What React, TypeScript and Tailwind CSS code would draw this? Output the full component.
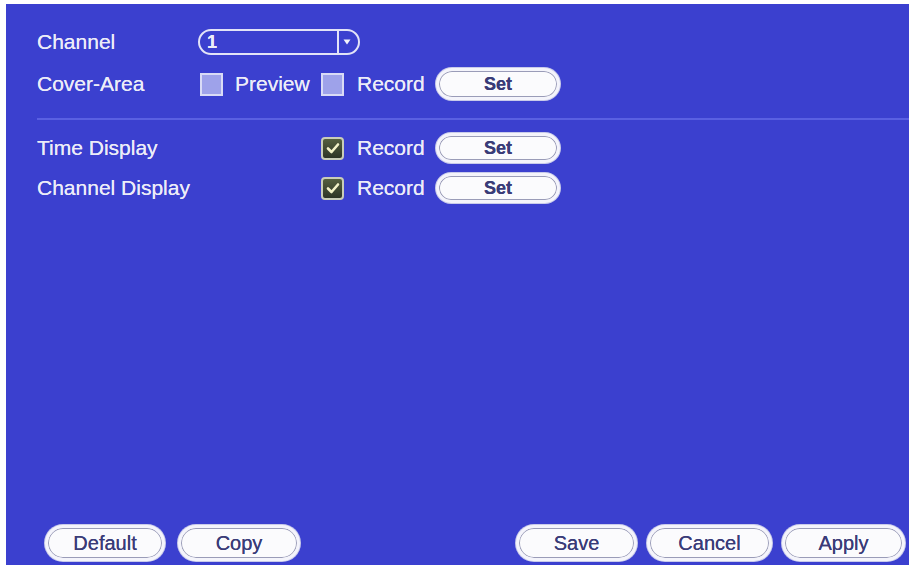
const font = { fontFamily: '"Liberation Sans", Arial, sans-serif' };

function PillButton({ label, className = '' }: { label: string; className?: string }) {
  return (
    <button
      className={`flex items-center justify-center rounded-full bg-[#fbfbfd] border-[3px] border-[#f4f4fb] shadow-[inset_0_0_0_1px_#9a9cb8,0_0_0_1px_#c9cbea] text-[#3a3c78] [text-shadow:0_0_0.6px_#3a3c78] ${className}`}
    >
      {label}
    </button>
  );
}

function Checkbox({ checked = false }: { checked?: boolean }) {
  if (checked) {
    return (
      <span className="w-[23px] h-[23px] shrink-0 rounded-[4px] border-2 border-[#c9cdb8] bg-gradient-to-b from-[#55603f] to-[#2e3526] flex items-center justify-center">
        <svg width="14" height="12" viewBox="0 0 14 12">
          <path d="M2 6.5 L5.5 10 L12 2.5" fill="none" stroke="#f3f2c8" strokeWidth="2.6" strokeLinecap="round" strokeLinejoin="round" />
        </svg>
      </span>
    );
  }
  return <span className="w-[23px] h-[23px] shrink-0 border-2 border-[#d9dbf6] bg-[#9ea2ea]" />;
}

export default function App() {
  return (
    <div className="w-[915px] h-[568px] bg-white pt-[4px] pb-[3px] pl-[6px] pr-[6px]" style={font}>
      <div className="h-full bg-[#3b40cf] flex flex-col text-[#ececf8] text-[21px] [text-shadow:0_0_0.6px_#ececf8]">
        {/* TOP SECTION */}
        <div className="pl-[31px] pt-[25px] flex flex-col gap-[13px]">
          <div className="flex items-center h-[26px]">
            <span className="w-[161px] shrink-0">Channel</span>
            <div className="w-[162px] h-[26px] rounded-full border-2 border-[#e2e3f7] flex items-center">
              <span className="flex-1 pl-[7px] font-bold text-[18px] leading-none">1</span>
              <span className="w-[21px] h-full border-l-2 border-[#e2e3f7] flex items-center justify-center pr-[3px]">
                <svg width="8" height="6" viewBox="0 0 8 6">
                  <path d="M0.5 0.5 H7.5 L4 5.5 Z" fill="#f4f4fb" />
                </svg>
              </span>
            </div>
          </div>
          <div className="flex items-center h-[32px]">
            <span className="w-[163px] shrink-0">Cover-Area</span>
            <Checkbox />
            <span className="ml-[12px] w-[86px]">Preview</span>
            <Checkbox />
            <span className="ml-[13px] w-[79px]">Record</span>
            <PillButton label="Set" className="w-[124px] h-[32px] text-[18px] font-bold" />
          </div>
        </div>

        {/* DIVIDER */}
        <div className="ml-[31px] mt-[18px] h-[2px] bg-[#5a60e2]" />

        {/* DISPLAY ROWS */}
        <div className="pl-[31px] mt-[13px] flex flex-col gap-[10px]">
          {['Time Display', 'Channel Display'].map((name) => (
            <div key={name} className="flex items-center h-[30px]">
              <span className="w-[284px] shrink-0">{name}</span>
              <Checkbox checked />
              <span className="ml-[13px] w-[79px]">Record</span>
              <PillButton label="Set" className="w-[124px] h-[30px] text-[18px] font-bold" />
            </div>
          ))}
        </div>

        <div className="flex-1" />

        {/* BOTTOM BUTTONS */}
        <div className="flex items-center pl-[39px] pr-[4px] pb-[4px] text-[20px]">
          <PillButton label="Default" className="w-[120px] h-[36px]" />
          <PillButton label="Copy" className="w-[122px] h-[36px] ml-[13px]" />
          <div className="flex-1" />
          <PillButton label="Save" className="w-[121px] h-[36px]" />
          <PillButton label="Cancel" className="w-[125px] h-[36px] ml-[10px]" />
          <PillButton label="Apply" className="w-[123px] h-[36px] ml-[10px]" />
        </div>
      </div>
    </div>
  );
}
